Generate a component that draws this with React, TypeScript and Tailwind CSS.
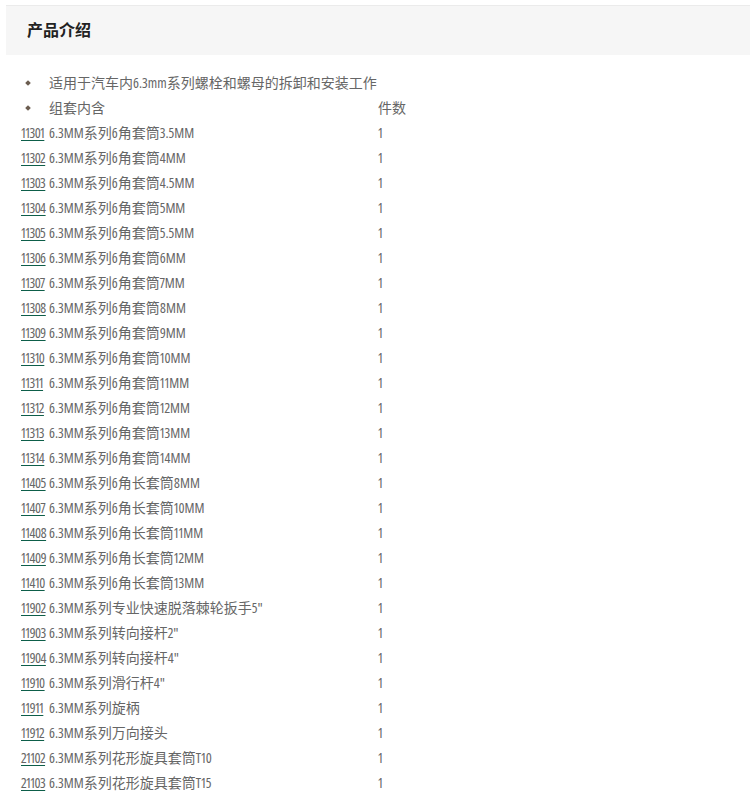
import React from "react";

const items: [string, string][] = [
  ["11301", "6.3MM系列6角套筒3.5MM"],
  ["11302", "6.3MM系列6角套筒4MM"],
  ["11303", "6.3MM系列6角套筒4.5MM"],
  ["11304", "6.3MM系列6角套筒5MM"],
  ["11305", "6.3MM系列6角套筒5.5MM"],
  ["11306", "6.3MM系列6角套筒6MM"],
  ["11307", "6.3MM系列6角套筒7MM"],
  ["11308", "6.3MM系列6角套筒8MM"],
  ["11309", "6.3MM系列6角套筒9MM"],
  ["11310", "6.3MM系列6角套筒10MM"],
  ["11311", "6.3MM系列6角套筒11MM"],
  ["11312", "6.3MM系列6角套筒12MM"],
  ["11313", "6.3MM系列6角套筒13MM"],
  ["11314", "6.3MM系列6角套筒14MM"],
  ["11405", "6.3MM系列6角长套筒8MM"],
  ["11407", "6.3MM系列6角长套筒10MM"],
  ["11408", "6.3MM系列6角长套筒11MM"],
  ["11409", "6.3MM系列6角长套筒12MM"],
  ["11410", "6.3MM系列6角长套筒13MM"],
  ["11902", "6.3MM系列专业快速脱落棘轮扳手5\""],
  ["11903", "6.3MM系列转向接杆2\""],
  ["11904", "6.3MM系列转向接杆4\""],
  ["11910", "6.3MM系列滑行杆4\""],
  ["11911", "6.3MM系列旋柄"],
  ["11912", "6.3MM系列万向接头"],
  ["21102", "6.3MM系列花形旋具套筒T10"],
  ["21103", "6.3MM系列花形旋具套筒T15"],
];

const font = {
  fontFamily: '"Open Sans", "Noto Sans CJK SC", sans-serif',
  fontStretch: "75%",
};

function Bullet() {
  return (
    <span className="flex h-[25px] w-[28px] shrink-0 items-center pl-[5px]">
      <span className="block h-[4px] w-[4px] rotate-45 bg-[#6b5d50]" />
    </span>
  );
}

export default function App() {
  return (
    <div className="min-h-[795px] bg-white pl-[6px] pt-[5px]">
      <div className="flex h-[50px] items-center border-t border-[#ebebeb] bg-[#f6f6f6] pb-[3px] pl-[21px]">
        <h2
          className="text-[16px] font-bold text-[#222]"
          style={{ fontFamily: '"Noto Sans CJK SC", sans-serif' }}
        >
          产品介绍
        </h2>
      </div>
      <div className="pl-[15px] pt-[15px] text-[14px] text-[#666] proportional-nums" style={font}>
        <div className="flex h-[25px] items-center">
          <Bullet />
          <span>适用于汽车内6.3mm系列螺栓和螺母的拆卸和安装工作</span>
        </div>
        <div className="flex h-[25px] items-center">
          <Bullet />
          <span className="w-[329px] shrink-0">组套内含</span>
          <span>件数</span>
        </div>
        {items.map(([code, name]) => (
          <div key={code} className="flex h-[25px] items-center">
            <span className="w-[28px] shrink-0 whitespace-nowrap">
              <a
                href="#"
                className="tracking-[-0.04em] text-[#666] underline decoration-[#0d5e49] underline-offset-2"
              >
                {code}
              </a>
            </span>
            <span className="w-[329px] shrink-0">{name}</span>
            <span>1</span>
          </div>
        ))}
      </div>
    </div>
  );
}
